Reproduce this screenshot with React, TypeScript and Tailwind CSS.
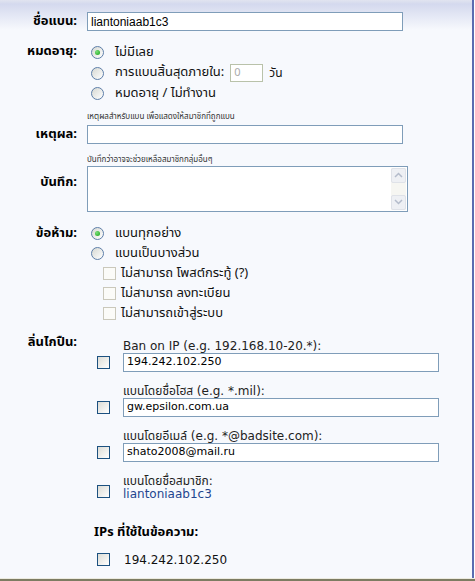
import React from "react";

function Radio({ checked }: { checked?: boolean }) {
  return (
    <span className="relative flex h-[13px] w-[13px] shrink-0 items-center justify-center rounded-full border border-[#5d7ea8] bg-[linear-gradient(135deg,#d6d8d2,#ffffff)]">
      {checked && (
        <span className="h-[5px] w-[5px] rounded-full bg-[radial-gradient(circle_at_35%_35%,#7ae07a,#16a116)]" />
      )}
    </span>
  );
}

function Check({ disabled }: { disabled?: boolean }) {
  return disabled ? (
    <span className="block h-[13px] w-[13px] shrink-0 border border-[#cac8bb] bg-[#fbfbf8]" />
  ) : (
    <span className="block h-[13px] w-[13px] shrink-0 border border-[#1c5180] bg-[linear-gradient(135deg,#dcdcd5,#ffffff)]" />
  );
}

function Label({ children, className = "" }: { children: React.ReactNode; className?: string }) {
  return (
    <div className={`w-[77px] shrink-0 text-right text-[13px] font-bold text-black ${className}`}>
      {children}
    </div>
  );
}

function BanItem({ caption, value }: { caption: string; value: string }) {
  return (
    <div className="mt-[12px] flex items-end first:mt-0">
      <div className="mb-[3px] ml-[10px]">
        <Check />
      </div>
      <div className="ml-[13px]">
        <div className="text-[12px] leading-[14px] text-[#222]">{caption}</div>
        <div className="flex h-[19px] w-[316px] items-center border border-[#7f9db9] bg-white px-[3px] text-[11px] text-black">
          {value}
        </div>
      </div>
    </div>
  );
}

export default function App() {
  return (
    <div className="flex h-[581px] w-[475px] flex-col bg-white [font-family:Tahoma,'Noto_Sans_Thai','Loma','Garuda','Waree','DejaVu_Sans',sans-serif]">
      <div className="h-[578px] w-[474px] border-r-2 border-[#5a6cb1] bg-[#f7f9fd] bg-[linear-gradient(to_bottom,#e1e4f0_0px,#d4d9ee_4px,#f7f9fd_30px)] bg-no-repeat pt-[12px]">
        {/* ban name */}
        <div className="flex items-center">
          <Label>ชื่อแบน:</Label>
          <div className="ml-[10px] flex h-[19px] w-[316px] items-center border border-[#7f9db9] bg-white px-[3px] text-[12px] text-black [font-family:'Liberation_Sans_Narrow',Tahoma,'Liberation_Sans',sans-serif]">
            liantoniaab1c3
          </div>
        </div>

        {/* expiry */}
        <div className="mt-[11px] flex">
          <Label className="leading-[16px]">หมดอายุ:</Label>
          <div className="ml-[14px] text-[13px] text-[#111]">
            <div className="flex h-[20px] items-center gap-[11px]">
              <Radio checked />
              <span>ไม่มีเลย</span>
            </div>
            <div className="flex h-[21px] items-center gap-[11px]">
              <Radio />
              <span>การแบนสิ้นสุดภายใน:</span>
              <div className="-ml-[5px] flex h-[18px] w-[33px] items-center border border-[#b9c2aa] bg-white px-[3px] text-[11px] text-[#aaa]">
                0
              </div>
              <span className="-ml-[5px] text-[12px]">วัน</span>
            </div>
            <div className="flex h-[20px] items-center gap-[11px]">
              <Radio />
              <span>หมดอายุ / ไม่ทำงาน</span>
            </div>
          </div>
        </div>

        {/* reason */}
        <div className="mt-[7px] flex items-end">
          <Label className="leading-[19px]">เหตุผล:</Label>
          <div className="ml-[10px]">
            <div className="mb-[2px] text-[8px] leading-[12px] text-[#333]">
              เหตุผลสำหรับแบน เพื่อแสดงให้สมาชิกที่ถูกแบน
            </div>
            <div className="h-[19px] w-[316px] border border-[#7f9db9] bg-white" />
          </div>
        </div>

        {/* notes */}
        <div className="mt-[11px] flex items-center">
          <Label>บันทึก:</Label>
          <div className="ml-[10px]">
            <div className="text-[8px] leading-[11px] text-[#333]">
              บันทึกว่าอาจจะช่วยเหลือสมาชิกกลุ่มอื่นๆ
            </div>
            <div className="flex h-[46px] w-[321px] justify-end border border-[#7f9db9] bg-white p-px">
              <div className="flex w-[15px] flex-col justify-between bg-[#f6f6f2]">
                <div className="flex h-[15px] items-center justify-center rounded-[2px] border border-[#dfe2e8] bg-[#eef0f4]">
                  <svg width="9" height="6" viewBox="0 0 9 6">
                    <path d="M1 5 L4.5 1.5 L8 5" fill="none" stroke="#b4bccb" strokeWidth="1.5" />
                  </svg>
                </div>
                <div className="flex h-[15px] items-center justify-center rounded-[2px] border border-[#dfe2e8] bg-[#eef0f4]">
                  <svg width="9" height="6" viewBox="0 0 9 6">
                    <path d="M1 1 L4.5 4.5 L8 1" fill="none" stroke="#b4bccb" strokeWidth="1.5" />
                  </svg>
                </div>
              </div>
            </div>
          </div>
        </div>

        {/* restrictions */}
        <div className="mt-[12px] flex">
          <Label className="leading-[18px]">ข้อห้าม:</Label>
          <div className="ml-[14px] text-[13px] text-[#111]">
            <div className="flex h-[20px] items-center gap-[11px]">
              <Radio checked />
              <span>แบนทุกอย่าง</span>
            </div>
            <div className="flex h-[20px] items-center gap-[11px]">
              <Radio />
              <span>แบนเป็นบางส่วน</span>
            </div>
            <div className="ml-[12px]">
              <div className="flex h-[20px] items-center gap-[5px]">
                <Check disabled />
                <span>ไม่สามารถ โพสต์กระทู้ (?)</span>
              </div>
              <div className="flex h-[20px] items-center gap-[5px]">
                <Check disabled />
                <span>ไม่สามารถ ลงทะเบียน</span>
              </div>
              <div className="flex h-[20px] items-center gap-[5px]">
                <Check disabled />
                <span>ไม่สามารถเข้าสู่ระบบ</span>
              </div>
            </div>
          </div>
        </div>

        {/* trigger */}
        <div className="mt-[15px] flex [font-family:'DejaVu_Sans',Tahoma,'Noto_Sans_Thai','Loma','Garuda',sans-serif]">
          <Label className="-mt-[5px] leading-[16px] [font-family:Tahoma,'Noto_Sans_Thai','Loma','Garuda','DejaVu_Sans',sans-serif]">
            ลิ่นไกปืน:
          </Label>
          <div className="ml-[10px] -mr-[10px]">
            <BanItem caption="Ban on IP (e.g. 192.168.10-20.*):" value="194.242.102.250" />
            <BanItem caption="แบนโดยชื่อโฮส (e.g. *.mil):" value="gw.epsilon.com.ua" />
            <BanItem caption="แบนโดยอีเมล์ (e.g. *@badsite.com):" value="shato2008@mail.ru" />
            <div className="mt-[12px] flex items-end">
              <div className="mb-[3px] ml-[10px]">
                <Check />
              </div>
              <div className="ml-[13px] text-[12px]">
                <div className="leading-[14px] text-[#222]">แบนโดยชื่อสมาชิก:</div>
                <div className="leading-[13px] text-[#24468f]">liantoniaab1c3</div>
              </div>
            </div>
          </div>
        </div>

        {/* post ips */}
        <div className="ml-[94px] mt-[23px] text-[13px] font-bold leading-[16px] text-black">
          IPs ที่ใช้ในข้อความ:
        </div>
        <div className="ml-[97px] mt-[10px] flex h-[20px] items-center gap-[14px] text-[12px] text-[#111] [font-family:'DejaVu_Sans',sans-serif]">
          <Check />
          <span>194.242.102.250</span>
        </div>
      </div>
      <div className="h-px bg-[#ecebe0]" />
      <div className="h-[2px] bg-[#7d7c62]" />
    </div>
  );
}
